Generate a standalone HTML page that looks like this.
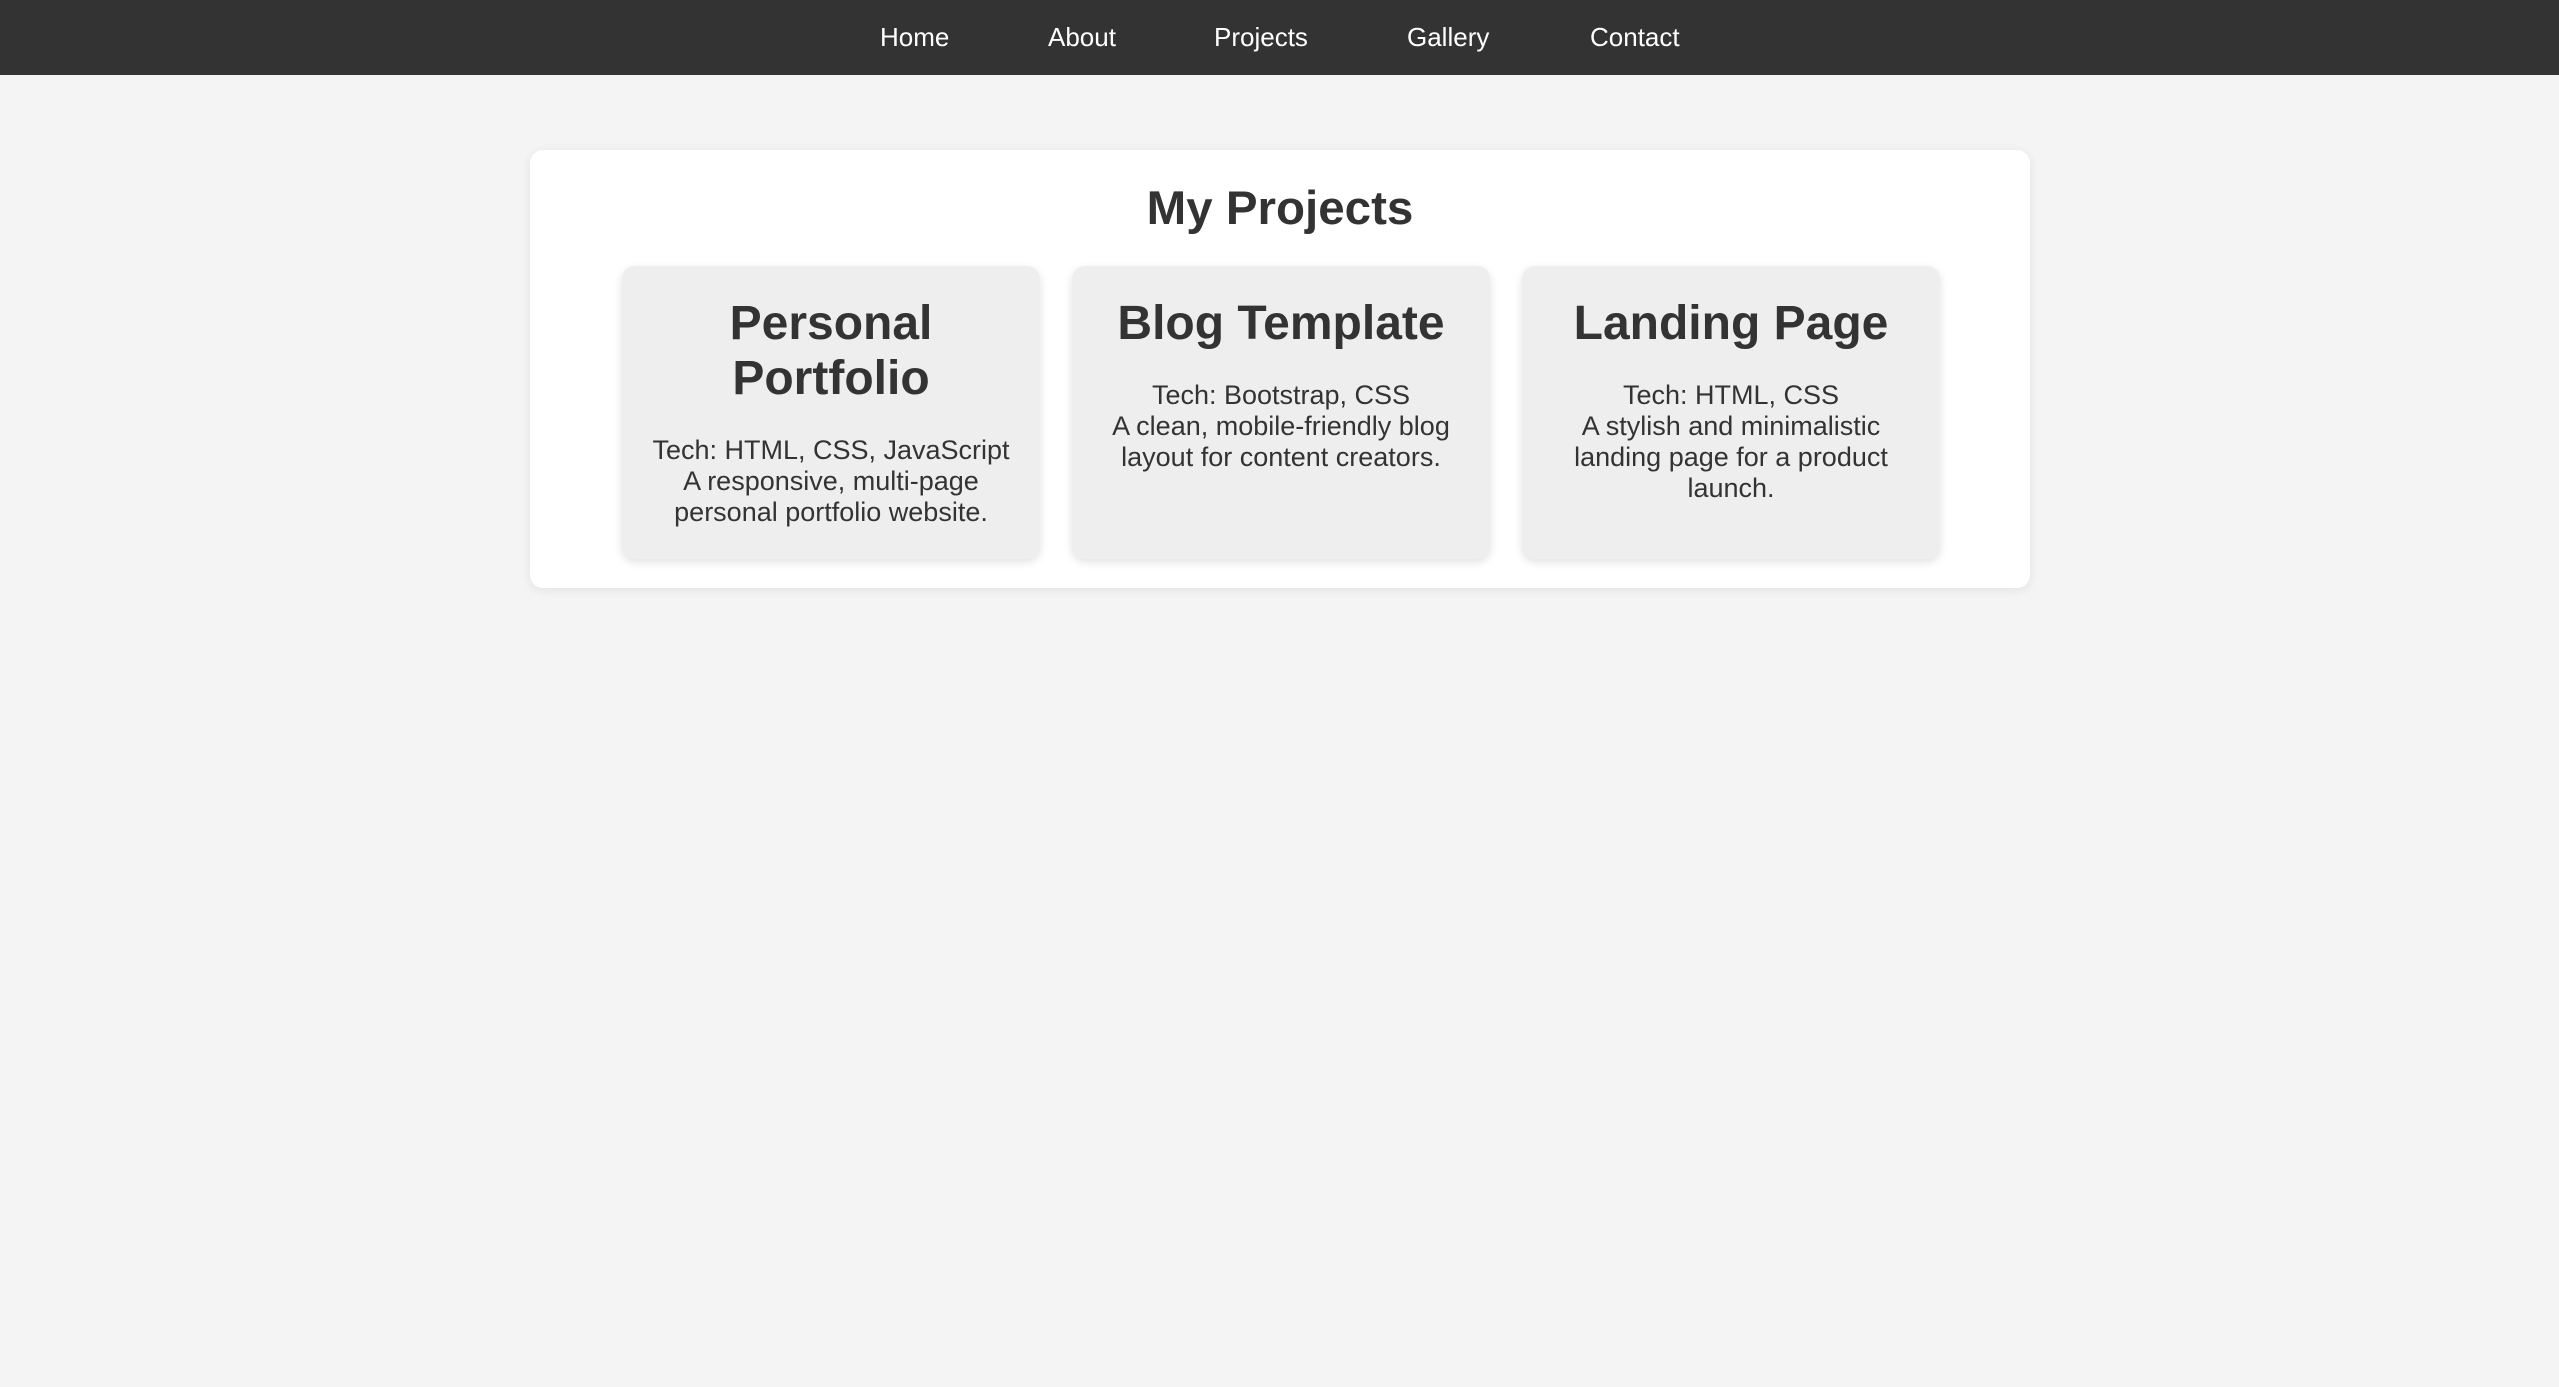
<!DOCTYPE html>
<html><head><meta charset="utf-8"><style>
html,body{margin:0;padding:0;width:2559px;height:1387px;background:#f4f4f4;font-family:"Liberation Sans",Arial,sans-serif;color:#333;overflow:hidden}
nav{position:absolute;left:0;top:0;width:2559px;height:75px;background:#333}
nav span{position:absolute;top:0;line-height:75px;font-size:26px;color:#fff}
.box{position:absolute;left:530px;top:150px;width:1500px;height:438px;background:#fff;border-radius:13px;box-shadow:0 2px 10px rgba(0,0,0,.08)}
.box h2{position:absolute;left:0;top:31px;margin:0;width:100%;text-align:center;font-size:47.5px;line-height:55px;font-weight:bold}
.card{position:absolute;top:266px;width:418px;height:293px;background:#eee;border-radius:13px;box-shadow:0 3px 9px rgba(0,0,0,.12);box-sizing:border-box;padding:30px 20px 0;text-align:center}
.card h3{margin:0;font-size:48px;line-height:55px;font-weight:bold}
.card p{margin:29px 0 0;font-size:27px;line-height:31px}
</style></head><body>
<nav>
<span style="left:880px">Home</span>
<span style="left:1048px">About</span>
<span style="left:1214px">Projects</span>
<span style="left:1407px">Gallery</span>
<span style="left:1590px">Contact</span>
</nav>
<div class="box"><h2>My Projects</h2></div>
<div class="card" style="left:622px"><h3>Personal Portfolio</h3><p>Tech: HTML, CSS, JavaScript<br>A responsive, multi-page personal portfolio website.</p></div>
<div class="card" style="left:1072px"><h3>Blog Template</h3><p>Tech: Bootstrap, CSS<br>A clean, mobile-friendly blog layout for content creators.</p></div>
<div class="card" style="left:1522px"><h3>Landing Page</h3><p>Tech: HTML, CSS<br>A stylish and minimalistic landing page for a product launch.</p></div>
</body></html>
